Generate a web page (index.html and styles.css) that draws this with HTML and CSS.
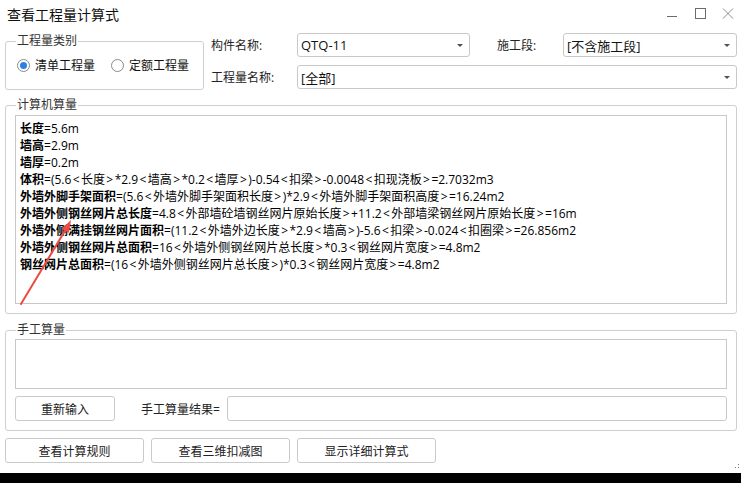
FILE: index.html
```html
<!DOCTYPE html>
<html lang="zh-CN">
<head>
<meta charset="utf-8">
<title>查看工程量计算式</title>
<link rel="stylesheet" href="styles.css">
</head>
<body>
<div class="window">
  <div class="titlebar">
    <div class="title">查看工程量计算式</div>
    <div class="controls">
      <svg class="ctl" width="12" height="12" viewBox="0 0 12 12"><path d="M1 8.5H11" stroke="#6b6b6b" stroke-width="1"/></svg>
      <svg class="ctl" width="12" height="12" viewBox="0 0 12 12"><rect x="1.5" y="0.5" width="10" height="10" fill="none" stroke="#6b6b6b" stroke-width="1"/></svg>
      <svg class="ctl" width="12" height="12" viewBox="0 0 12 12"><path d="M1 0.5L11 10.5M11 0.5L1 10.5" stroke="#8c8c8c" stroke-width="1"/></svg>
    </div>
  </div>

  <div class="top">
    <fieldset class="group type-group">
      <legend>工程量类别</legend>
      <div class="radios">
        <div class="radio"><span class="dot checked"></span><span>清单工程量</span></div>
        <div class="radio"><span class="dot"></span><span>定额工程量</span></div>
      </div>
    </fieldset>
    <div class="form">
      <div class="lbl">构件名称:</div>
      <div class="select">QTQ-11<span class="caret"></span></div>
      <div class="lbl lbl-stage">施工段:</div>
      <div class="select">[不含施工段]<span class="caret"></span></div>
      <div class="lbl">工程量名称:</div>
      <div class="select span3">[全部]<span class="caret"></span></div>
    </div>
  </div>

  <fieldset class="group calc-group">
    <legend>计算机算量</legend>
    <div class="textbox formulas">
      <div><b>长度</b>=5.6m</div>
      <div><b>墙高</b>=2.9m</div>
      <div><b>墙厚</b>=0.2m</div>
      <div><b>体积</b>=(5.6<i class="a">&lt;</i>长度<i class="a">&gt;</i>*2.9<i class="a">&lt;</i>墙高<i class="a">&gt;</i>*0.2<i class="a">&lt;</i>墙厚<i class="a">&gt;</i>)-0.54<i class="a">&lt;</i>扣梁<i class="a">&gt;</i>-0.0048<i class="a">&lt;</i>扣现浇板<i class="a">&gt;</i>=2.7032m3</div>
      <div><b>外墙外脚手架面积</b>=(5.6<i class="a">&lt;</i>外墙外脚手架面积长度<i class="a">&gt;</i>)*2.9<i class="a">&lt;</i>外墙外脚手架面积高度<i class="a">&gt;</i>=16.24m2</div>
      <div><b>外墙外侧钢丝网片总长度</b>=4.8<i class="a">&lt;</i>外部墙砼墙钢丝网片原始长度<i class="a">&gt;</i>+11.2<i class="a">&lt;</i>外部墙梁钢丝网片原始长度<i class="a">&gt;</i>=16m</div>
      <div><b>外墙外侧满挂钢丝网片面积</b>=(11.2<i class="a">&lt;</i>外墙外边长度<i class="a">&gt;</i>*2.9<i class="a">&lt;</i>墙高<i class="a">&gt;</i>)-5.6<i class="a">&lt;</i>扣梁<i class="a">&gt;</i>-0.024<i class="a">&lt;</i>扣圈梁<i class="a">&gt;</i>=26.856m2</div>
      <div><b>外墙外侧钢丝网片总面积</b>=16<i class="a">&lt;</i>外墙外侧钢丝网片总长度<i class="a">&gt;</i>*0.3<i class="a">&lt;</i>钢丝网片宽度<i class="a">&gt;</i>=4.8m2</div>
      <div><b>钢丝网片总面积</b>=(16<i class="a">&lt;</i>外墙外侧钢丝网片总长度<i class="a">&gt;</i>)*0.3<i class="a">&lt;</i>钢丝网片宽度<i class="a">&gt;</i>=4.8m2</div>
    </div>
  </fieldset>

  <fieldset class="group manual-group">
    <legend>手工算量</legend>
    <div class="textbox manual-input"></div>
    <div class="manual-row">
      <div class="btn btn-reset">重新输入</div>
      <div class="result-lbl">手工算量结果=</div>
      <div class="input"></div>
    </div>
  </fieldset>

  <div class="actions">
    <div class="btn btn-wide">查看计算规则</div>
    <div class="btn btn-wide">查看三维扣减图</div>
    <div class="btn btn-wide">显示详细计算式</div>
  </div>

  <svg class="grip" width="6" height="6" viewBox="0 0 6 6">
    <rect x="4" y="0" width="1" height="1" fill="#777"/>
    <rect x="1" y="3" width="1" height="1" fill="#777"/>
    <rect x="4" y="3" width="1" height="1" fill="#777"/>
  </svg>

  <svg class="arrow" width="741" height="483" viewBox="0 0 741 483">
    <line x1="21" y1="304" x2="66" y2="229" stroke="#ec4a42" stroke-width="2" stroke-linecap="round"/>
    <polygon points="71,220 68.8,233 61.8,228.8" fill="#ec4a42"/>
  </svg>
</div>
</body>
</html>
```

FILE: styles.css
```css
* {
  box-sizing: border-box;
}

html, body {
  margin: 0;
  padding: 0;
}

body {
  width: 741px;
  height: 483px;
  background: #000;
  font-family: "Open Sans", "Noto Sans CJK SC", sans-serif;
  font-size: 12px;
  color: #222;
  overflow: hidden;
}

.window {
  position: relative;
  width: 741px;
  height: 473px;
  background: #fff;
  display: flex;
  flex-direction: column;
}

.titlebar {
  height: 30px;
  display: flex;
  align-items: center;
  justify-content: space-between;
  padding: 0 7px 0 7px;
}

.title {
  font-size: 14px;
  color: #111;
  line-height: 18px;
}

.controls {
  display: flex;
  gap: 16px;
  align-items: center;
  margin-top: -3px;
}

.ctl {
  display: block;
}

.top {
  display: flex;
  margin-top: 3px;
}

.group {
  margin: 0 0 0 5px;
  border: 1px solid #cfcfcf;
  border-radius: 3px;
  min-width: 0;
}

.group legend {
  font-size: 12px;
  line-height: 16px;
  margin-left: 1px;
  padding: 0 1px;
  color: #333;
}

.type-group {
  width: 199px;
  padding: 8px 0 16px 11px;
}

.type-group legend {
  margin-left: -1px;
}

.radios {
  display: flex;
  gap: 16px;
  height: 16px;
  align-items: center;
}

.radio {
  display: flex;
  align-items: center;
  gap: 5px;
  color: #111;
}

.dot {
  width: 13px;
  height: 13px;
  border: 1px solid #8a8a8a;
  border-radius: 50%;
  background: #fff;
  display: flex;
  align-items: center;
  justify-content: center;
}

.dot.checked::after {
  content: "";
  width: 7px;
  height: 7px;
  border-radius: 50%;
  background: #2f7ee3;
}

.form {
  margin-left: 7px;
  display: grid;
  grid-template-columns: 86px 173px 93px 174px;
  grid-auto-rows: 24px;
  row-gap: 8px;
}

.lbl {
  display: flex;
  align-items: center;
  font-size: 12px;
  color: #222;
}

.lbl-stage {
  padding-left: 27px;
}

.select {
  position: relative;
  display: flex;
  align-items: center;
  padding-left: 3px;
  border: 1px solid #c9c9c9;
  border-radius: 3px;
  font-size: 13px;
  color: #111;
}

.span3 {
  grid-column: 2 / span 3;
}

.caret {
  position: absolute;
  right: 6px;
  top: 10px;
  width: 0;
  height: 0;
  border-left: 3px solid transparent;
  border-right: 3px solid transparent;
  border-top: 3px solid #505050;
}

.calc-group {
  width: 732px;
  margin-top: 7px;
  padding: 2px 9px 9px 9px;
}

.textbox {
  border: 1px solid #c9c9c9;
  background: #fff;
}

.formulas {
  height: 189px;
  padding: 4px 4px;
  font-size: 12px;
  line-height: 17px;
  color: #000;
  white-space: nowrap;
  overflow: hidden;
}

.formulas b {
  font-weight: 700;
}

.formulas .a {
  font-style: normal;
  padding: 0 1.4px;
}

.manual-group {
  width: 732px;
  margin-top: 8px;
  padding: 1px 9px 9px 9px;
}

.manual-input {
  height: 50px;
}

.manual-row {
  display: flex;
  align-items: center;
  margin-top: 7px;
  height: 25px;
}

.btn {
  display: flex;
  align-items: center;
  justify-content: center;
  border: 1px solid #cacaca;
  border-radius: 3px;
  background: #fff;
  font-size: 12px;
  color: #222;
  height: 25px;
}

.btn-reset {
  width: 100px;
}

.result-lbl {
  width: 112px;
  padding-left: 26px;
  color: #222;
}

.input {
  flex: 1;
  height: 25px;
  border: 1px solid #c9c9c9;
  border-radius: 3px;
}

.actions {
  display: flex;
  gap: 7px;
  margin: 7px 0 0 5px;
}

.btn-wide {
  width: 139px;
}

.grip {
  position: absolute;
  right: 1px;
  bottom: 3px;
}

.arrow {
  position: absolute;
  left: 0;
  top: 0;
  pointer-events: none;
}
```
